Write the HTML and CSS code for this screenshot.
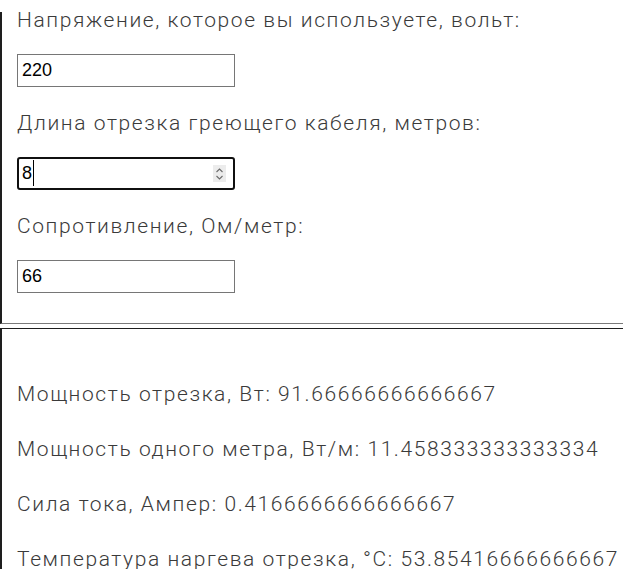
FILE: index.html
```html
<!DOCTYPE html>
<html lang="ru">
<head>
<meta charset="utf-8">
<title>Калькулятор греющего кабеля</title>
<link rel="stylesheet" href="styles.css">
</head>
<body>
<div class="topbar"></div>
<div class="calc">
  <div class="field">
    <label class="label" for="volt">Напряжение, которое вы используете, вольт:</label>
    <span class="input-wrap"><input class="num" id="volt" type="text" value="220"></span>
  </div>
  <div class="field">
    <label class="label" for="len">Длина отрезка греющего кабеля, метров:</label>
    <span class="input-wrap focused">
      <input class="num" id="len" type="text" value="8">
      <span class="caret"></span>
      <span class="spin">
        <svg width="9" height="14" viewBox="0 0 9 14"><path d="M1.5 5 L4.5 2 L7.5 5 M1.5 9 L4.5 12 L7.5 9" fill="none" stroke="#6b6b6b" stroke-width="1.1"/></svg>
      </span>
    </span>
  </div>
  <div class="field">
    <label class="label" for="res">Сопротивление, Ом/метр:</label>
    <span class="input-wrap"><input class="num" id="res" type="text" value="66"></span>
  </div>
</div>
<div class="results">
  <p class="res">Мощность отрезка, Вт: 91.66666666666667</p>
  <p class="res">Мощность одного метра, Вт/м: 11.458333333333334</p>
  <p class="res">Сила тока, Ампер: 0.4166666666666667</p>
  <p class="res">Температура наргева отрезка, °С: 53.85416666666667</p>
</div>
</body>
</html>
```

FILE: styles.css
```css
html, body {
  margin: 0;
  padding: 0;
  background: #ffffff;
  overflow: hidden;
}
body {
  font-family: Roboto, "Liberation Sans", sans-serif;
  font-weight: 300;
  color: #3a3a3a;
  width: 700px;
}
.topbar {
  position: fixed;
  top: 0;
  left: 0;
  width: 100%;
  height: 12px;
  background: #ffffff;
  z-index: 5;
}
.calc {
  border-left: 2px solid #1e1e1e;
  border-bottom: 1px solid #7a7a7a;
  padding: 8px 0 30px 15px;
  margin-bottom: 4px;
  display: flex;
  flex-direction: column;
  gap: 24px;
}
.field {
  display: flex;
  flex-direction: column;
  align-items: flex-start;
  gap: 21px;
}
.label {
  font-size: 21px;
  line-height: 25px;
  letter-spacing: 1.6px;
  white-space: nowrap;
}
.input-wrap {
  position: relative;
  display: block;
  width: 218px;
  height: 33px;
}
.num {
  box-sizing: border-box;
  width: 218px;
  height: 33px;
  margin: 0;
  border: 1px solid #767676;
  padding: 0 4px;
  font-family: "Liberation Sans", Arial, sans-serif;
  font-size: 18px;
  color: #000;
  background: #fff;
  outline: none;
}
.focused .num {
  border: 2px solid #101010;
  border-radius: 3px;
  padding: 0 3px;
}
.caret {
  position: absolute;
  left: 16px;
  top: 3px;
  width: 1px;
  height: 26px;
  background: #000;
}
.spin {
  position: absolute;
  left: 196px;
  top: 8px;
  width: 13px;
  height: 17px;
  background: #ececec;
  display: flex;
  align-items: center;
  justify-content: center;
}
.results {
  border-left: 2px solid #1e1e1e;
  border-top: 1px solid #1e1e1e;
  padding: 53px 0 0 15px;
  display: flex;
  flex-direction: column;
  gap: 30px;
}
.res {
  margin: 0;
  font-size: 21px;
  line-height: 25px;
  letter-spacing: 1.6px;
  white-space: nowrap;
}
```
